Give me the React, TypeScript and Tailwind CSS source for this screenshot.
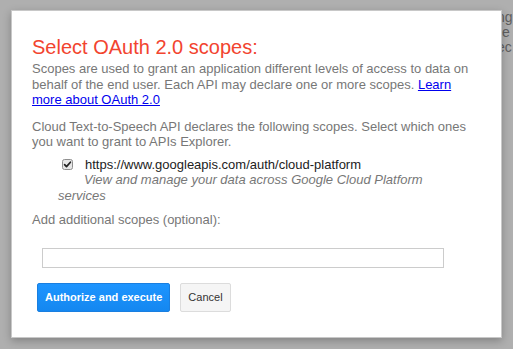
import React from 'react';

const CheckMark: React.FC = () => (
  <svg width="11" height="11" viewBox="0 0 11 11" className="inline-block align-[-1px] ml-[4px] mr-[12px]">
    <rect x="0.5" y="0.5" width="10" height="10" rx="2" fill="#e6e6e6" stroke="#8f8f8f" />
    <path d="M2.6 5.6 L4.5 7.6 L8.4 3.2" fill="none" stroke="#222" strokeWidth="1.7" strokeLinecap="round" strokeLinejoin="round" />
  </svg>
);

const App: React.FC = () => {
  return (
    <div className="relative w-[513px] h-[349px] overflow-hidden bg-[#afafaf] font-['Liberation_Sans',Arial,sans-serif]">
      {/* page text peeking out behind the dialog */}
      <div className="absolute left-[497px] top-[10px] text-[14px] leading-[15px] text-[#5f5f5f] whitespace-nowrap">
        <div>ng</div>
        <div>"e</div>
        <div>ec</div>
      </div>

      <div className="relative ml-[11px] mt-[10px] w-[491px] h-[328px] bg-white border border-[#c8c8c8] shadow-[0_3px_8px_rgba(0,0,0,0.25)] px-[20px] pt-[23px]">
        <h1 className="text-[20px] leading-[26px] text-[#f2442f] mb-[1px]">Select OAuth 2.0 scopes:</h1>

        <p className="text-[13px] leading-[15.5px] text-[#777]">
          Scopes are used to grant an application different levels of access to data on behalf of the end user. Each API
          may declare one or more scopes.{' '}
          <a href="#" className="text-[#0000ee] underline">Learn more about OAuth 2.0</a>
        </p>

        <p className="mt-[11px] text-[13px] leading-[15.5px] text-[#777]">
          Cloud Text-to-Speech API declares the following scopes. Select which ones you want to grant to APIs Explorer.
        </p>

        <div className="mt-[7px] pl-[26px] pr-[20px] text-[13px] leading-[15.5px]">
          <CheckMark />
          <span className="text-[#222]">https://www.googleapis.com/auth/cloud-platform</span>
          <br />
          <span className="ml-[26px] italic text-[#777]">View and manage your data across Google Cloud Platform services</span>
        </div>

        <p className="mt-[9px] text-[13px] leading-[15.5px] text-[#777]">Add additional scopes (optional):</p>

        <input type="text" className="block mt-[20px] ml-[10px] w-[402px] h-[20px] border border-[#ccc] outline-none" />

        <div className="mt-[15px] ml-[5px] flex gap-[10px]">
          <button className="h-[29px] px-[7px] rounded-[2px] border border-[#1a7fe0] bg-gradient-to-b from-[#1d95ff] to-[#1487f0] text-white text-[11px] font-bold">
            Authorize and execute
          </button>
          <button className="h-[29px] px-[7px] rounded-[2px] border border-[#dcdcdc] bg-[#f5f5f5] text-[#333] text-[11px]">
            Cancel
          </button>
        </div>
      </div>
    </div>
  );
};

export default App;
